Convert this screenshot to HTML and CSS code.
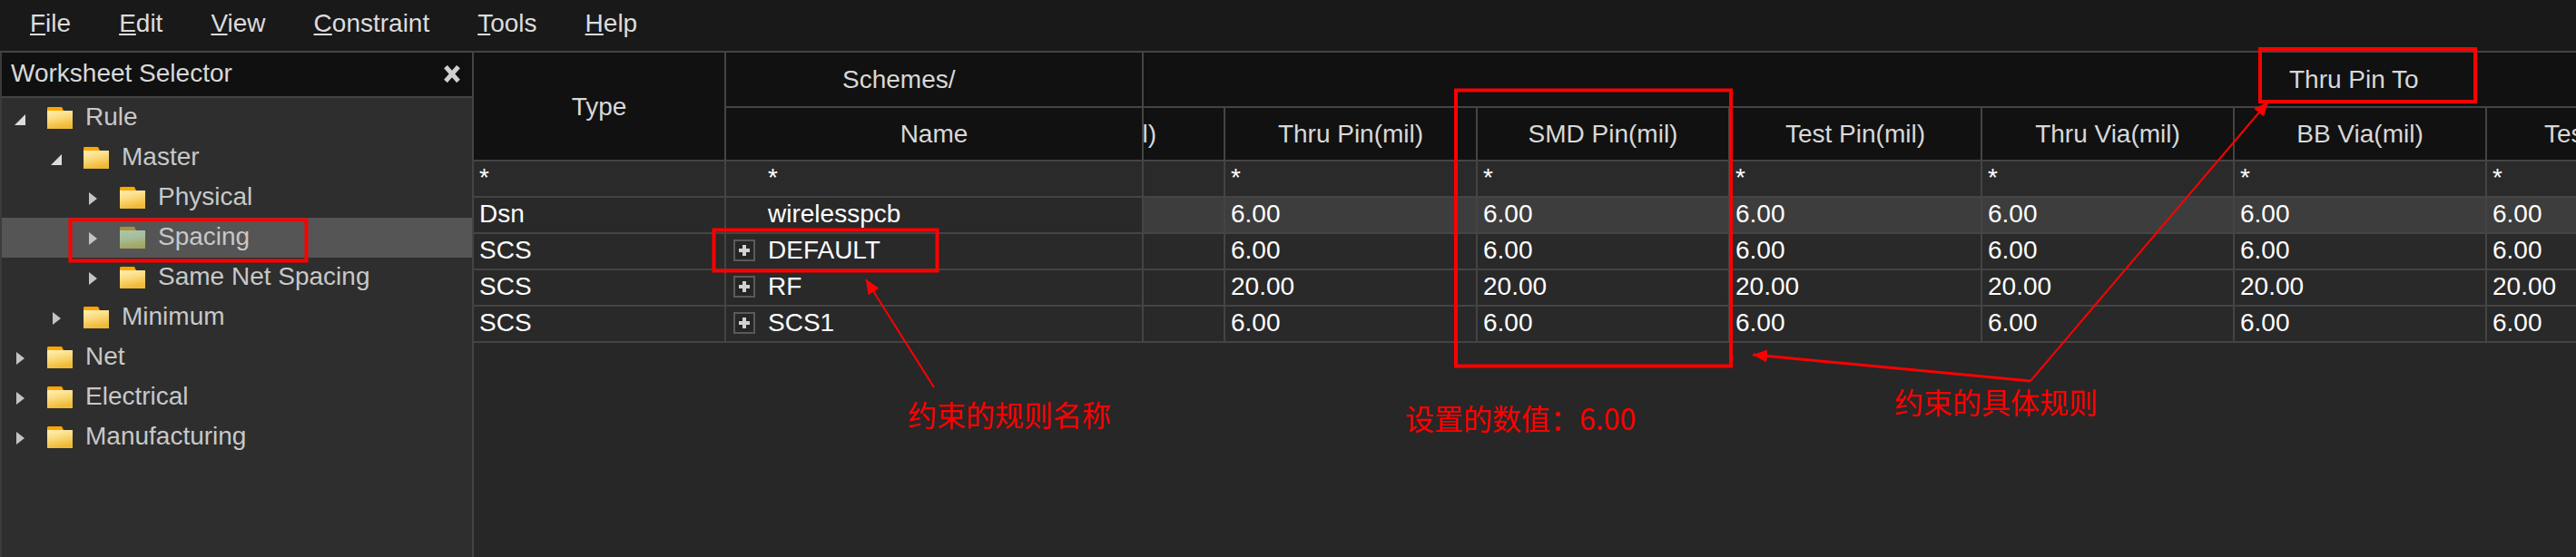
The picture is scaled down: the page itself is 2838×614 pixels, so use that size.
FILE: index.html
```html
<!DOCTYPE html>
<html lang="en">
<head>
<meta charset="utf-8">
<title>Constraint Manager</title>
<link rel="stylesheet" href="styles.css">
</head>
<body>
<div class="app">
  <svg width="0" height="0" class="defs">
    <defs>
      <linearGradient id="fold" x1="0" y1="0" x2="0.3" y2="1">
        <stop offset="0" stop-color="#ffefb4"/>
        <stop offset="0.45" stop-color="#fcdc82"/>
        <stop offset="1" stop-color="#efba35"/>
      </linearGradient>
      <linearGradient id="foldsel" x1="0" y1="0" x2="0.2" y2="1">
        <stop offset="0" stop-color="#a9c7ae"/>
        <stop offset="0.5" stop-color="#a5bd98"/>
        <stop offset="1" stop-color="#a3a55e"/>
      </linearGradient>
      <symbol id="folder" viewBox="0 0 28 24">
        <path d="M1 0h15l2 4v3H0V1z" fill="#ffa600"/>
        <path d="M0 4h28v20H0z" fill="url(#fold)"/>
      </symbol>
      <symbol id="folder-sel" viewBox="0 0 28 24">
        <path d="M1 0h15l2 4v3H0V1z" fill="#a98f3a"/>
        <path d="M0 4h28v20H0z" fill="url(#foldsel)"/>
      </symbol>
      <symbol id="open" viewBox="0 0 12 12"><path d="M12 0v12H0z" fill="#dcdcdc"/></symbol>
      <symbol id="shut" viewBox="0 0 9 14"><path d="M0 0l9 7-9 7z" fill="#c4c4c4"/></symbol>
      <symbol id="plus" viewBox="0 0 24 24">
        <rect x="1" y="1" width="22" height="22" fill="#262626" stroke="#5a5a5a" stroke-width="2"/>
        <path d="M10 6h4v4h4v4h-4v4h-4v-4H6v-4h4z" fill="#d2d2d2"/>
      </symbol>
    </defs>
  </svg>

  <nav class="menubar">
    <span class="menu-item"><u>F</u>ile</span>
    <span class="menu-item"><u>E</u>dit</span>
    <span class="menu-item"><u>V</u>iew</span>
    <span class="menu-item"><u>C</u>onstraint</span>
    <span class="menu-item"><u>T</u>ools</span>
    <span class="menu-item"><u>H</u>elp</span>
  </nav>

  <main class="workspace">
    <aside class="sidebar">
      <header class="side-head">
        <span>Worksheet Selector</span>
        <svg class="close" width="18" height="19" viewBox="0 0 18 19"><path d="M2 1.5l14 16M16 1.5L2 17.5" stroke="#d0d0d0" stroke-width="5"/></svg>
      </header>
      <ul class="tree">
        <li class="node d0"><svg class="tw-open"><use href="#open"/></svg><svg class="fold"><use href="#folder"/></svg><span>Rule</span></li>
        <li class="node d1"><svg class="tw-open"><use href="#open"/></svg><svg class="fold"><use href="#folder"/></svg><span>Master</span></li>
        <li class="node d2"><svg class="tw-shut"><use href="#shut"/></svg><svg class="fold"><use href="#folder"/></svg><span>Physical</span></li>
        <li class="node d2 selected"><svg class="tw-shut"><use href="#shut"/></svg><svg class="fold"><use href="#folder-sel"/></svg><span>Spacing</span></li>
        <li class="node d2"><svg class="tw-shut"><use href="#shut"/></svg><svg class="fold"><use href="#folder"/></svg><span>Same Net Spacing</span></li>
        <li class="node d1"><svg class="tw-shut"><use href="#shut"/></svg><svg class="fold"><use href="#folder"/></svg><span>Minimum</span></li>
        <li class="node d0"><svg class="tw-shut"><use href="#shut"/></svg><svg class="fold"><use href="#folder"/></svg><span>Net</span></li>
        <li class="node d0"><svg class="tw-shut"><use href="#shut"/></svg><svg class="fold"><use href="#folder"/></svg><span>Electrical</span></li>
        <li class="node d0"><svg class="tw-shut"><use href="#shut"/></svg><svg class="fold"><use href="#folder"/></svg><span>Manufacturing</span></li>
      </ul>
    </aside>

    <section class="sheet">
      <div class="th type-head">Type</div>
      <div class="th schemes-head">Schemes/</div>
      <div class="th group-head">Thru Pin To</div>
      <div class="th name-head">Name</div>
      <div class="th clip-head"><span>Pin(mil)</span></div>
      <div class="th">Thru Pin(mil)</div>
      <div class="th">SMD Pin(mil)</div>
      <div class="th">Test Pin(mil)</div>
      <div class="th">Thru Via(mil)</div>
      <div class="th">BB Via(mil)</div>
      <div class="th last tail-head">Test Via(mil)</div>

      <div class="td filter">*</div>
      <div class="td filter name">*</div>
      <div class="td filter"></div>
      <div class="td filter">*</div>
      <div class="td filter">*</div>
      <div class="td filter">*</div>
      <div class="td filter">*</div>
      <div class="td filter">*</div>
      <div class="td filter last">*</div>

      <div class="td">Dsn</div>
      <div class="td name">wirelesspcb</div>
      <div class="td hl"></div>
      <div class="td hl">6.00</div>
      <div class="td hl">6.00</div>
      <div class="td hl">6.00</div>
      <div class="td hl">6.00</div>
      <div class="td hl">6.00</div>
      <div class="td hl last">6.00</div>

      <div class="td">SCS</div>
      <div class="td expand"><svg class="plus"><use href="#plus"/></svg>DEFAULT</div>
      <div class="td"></div>
      <div class="td">6.00</div>
      <div class="td">6.00</div>
      <div class="td">6.00</div>
      <div class="td">6.00</div>
      <div class="td">6.00</div>
      <div class="td last">6.00</div>

      <div class="td">SCS</div>
      <div class="td expand"><svg class="plus"><use href="#plus"/></svg>RF</div>
      <div class="td"></div>
      <div class="td">20.00</div>
      <div class="td">20.00</div>
      <div class="td">20.00</div>
      <div class="td">20.00</div>
      <div class="td">20.00</div>
      <div class="td last">20.00</div>

      <div class="td">SCS</div>
      <div class="td expand"><svg class="plus"><use href="#plus"/></svg>SCS1</div>
      <div class="td"></div>
      <div class="td">6.00</div>
      <div class="td">6.00</div>
      <div class="td">6.00</div>
      <div class="td">6.00</div>
      <div class="td">6.00</div>
      <div class="td last">6.00</div>
    </section>
  </main>

  <svg class="marks" width="2838" height="614" viewBox="0 0 2838 614">
    <defs>
      <marker id="head" markerUnits="userSpaceOnUse" markerWidth="18" markerHeight="16" refX="16" refY="7" orient="auto">
        <path d="M0 0l16 7L0 14z" fill="#f00"/>
      </marker>
    </defs>
    <g class="box">
      <rect x="77.5" y="242.5" width="260" height="45"/>
      <rect x="786.5" y="253.5" width="246" height="45"/>
      <rect x="1604" y="99.5" width="303" height="304"/>
      <rect x="2490" y="54" width="237" height="58"/>
    </g>
    <g class="arrow">
      <path d="M1029 427L954 308" marker-end="url(#head)"/>
      <path class="thick" d="M2237 420L1931 391" marker-end="url(#head)"/>
      <path d="M2237 420L2499 112" marker-end="url(#head)"/>
    </g>
  </svg>
  <div class="note note-name">约束的规则名称</div>
  <div class="note note-value">设置的数值：6.00</div>
  <div class="note note-rule">约束的具体规则</div>
</div>
</body>
</html>
```

FILE: styles.css
```css
html, body {
  margin: 0;
  padding: 0;
  background: #272727;
}

.app {
  position: relative;
  width: 2838px;
  height: 614px;
  overflow: hidden;
  font-family: "Liberation Sans", Arial, sans-serif;
  font-size: 28px;
  color: #fff;
}

.defs {
  position: absolute;
}

.menubar {
  display: flex;
  gap: 53px;
  align-items: center;
  box-sizing: border-box;
  height: 58px;
  padding: 0 0 5px 33px;
  background: #191919;
  border-bottom: 2px solid #444;
  color: #dcdcdc;
}

.workspace {
  display: flex;
  height: 556px;
}

.sidebar {
  box-sizing: border-box;
  flex: 0 0 522px;
  border-left: 2px solid #3c3c3c;
  border-right: 2px solid #444;
  background: #2e2e2e;
  color: #c8c8c8;
}

.side-head {
  display: flex;
  align-items: center;
  justify-content: space-between;
  box-sizing: border-box;
  height: 50px;
  padding: 0 13px 2px 10px;
  background: #101010;
  border-bottom: 2px solid #444;
  color: #d8d8d8;
}

.tree {
  list-style: none;
  margin: 0;
  padding: 0;
}

.node {
  display: flex;
  align-items: center;
  height: 44px;
}

.node span {
  padding-bottom: 2px;
}

.d0 { padding-left: 14px; }
.d1 { padding-left: 54px; }
.d2 { padding-left: 94px; }

.selected {
  background: #555;
}

.tw-open, .tw-shut {
  flex: none;
  margin-top: 2px;
}

.tw-open {
  width: 12px;
  height: 12px;
  margin-right: 24px;
  margin-top: 4px;
}

.tw-shut {
  width: 9px;
  height: 14px;
  margin-left: 2px;
  margin-right: 25px;
}

.fold {
  flex: none;
  width: 28px;
  height: 24px;
  margin-right: 14px;
}

.sheet {
  flex: 1;
  display: grid;
  grid-template-columns: 278px 460px 90px repeat(5, 278px) 1fr;
  grid-template-rows: 61px 59px repeat(5, 40px);
  align-content: start;
  overflow: hidden;
  min-width: 0;
}

.th, .td {
  box-sizing: border-box;
  display: flex;
  align-items: center;
  border-right: 2px solid #444;
  border-bottom: 2px solid #444;
  white-space: nowrap;
  overflow: hidden;
  min-width: 0;
}

.th {
  justify-content: center;
  background: #111;
  color: #d8d8d8;
}

.td {
  padding-left: 6px;
  padding-bottom: 2px;
  background: #292929;
}

.last {
  border-right: none;
}

.type-head {
  grid-row: span 2;
  padding-top: 2px;
}

.schemes-head {
  justify-content: flex-start;
  padding-left: 128px;
}

.group-head {
  grid-column: 3 / -1;
  justify-content: flex-start;
  padding-left: 1262px;
  border-right: none;
}

.clip-head {
  justify-content: flex-end;
  padding-right: 74px;
}

.clip-head span {
  flex: none;
}

.tail-head {
  justify-content: flex-start;
  padding-left: 63px;
}

.filter {
  align-items: flex-start;
  padding-top: 2px;
  padding-bottom: 0;
  background: #2a2a2a;
}

.name {
  padding-left: 46px;
}

.expand {
  gap: 14px;
  padding-left: 8px;
}

.plus {
  flex: none;
  width: 24px;
  height: 24px;
}

.hl {
  background: #3d3d3d;
}

.marks {
  position: absolute;
  left: 0;
  top: 0;
  pointer-events: none;
}

.box rect {
  fill: none;
  stroke: #f00;
  stroke-width: 4;
}

.arrow path {
  fill: none;
  stroke: #f00;
  stroke-width: 2;
}

.arrow path.thick {
  stroke-width: 3;
}

.note {
  position: absolute;
  font-family: "Noto Sans CJK SC", "Liberation Sans", sans-serif;
  font-size: 32px;
  line-height: 36px;
  color: #f00;
  white-space: nowrap;
}

.note-name { left: 1000px; top: 438px; }
.note-value { left: 1548px; top: 442px; }
.note-rule { left: 2087px; top: 424px; }
```
